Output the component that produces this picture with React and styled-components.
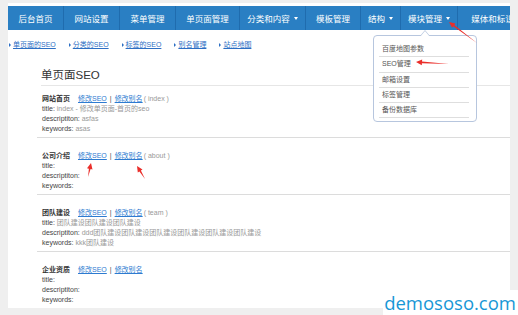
import React from "react";
import styled, { createGlobalStyle } from "styled-components";

const GlobalStyle = createGlobalStyle`
  html, body {
    margin: 0;
    padding: 0;
    background: #efefef;
    width: 518px;
    height: 315px;
    overflow: hidden;
    font-family: "Liberation Sans", "Noto Sans CJK SC", sans-serif;
  }
`;

const Panel = styled.div`
  position: relative;
  margin: 3px 8px 0 8px;
  padding-top: 3px;
  width: 502px;
  height: 302px;
  background: #fff;
  overflow: hidden;
`;

const NavBar = styled.div`
  display: flex;
  height: 24px;
  background: #2a7fc3;
  white-space: nowrap;
`;

const NavItem = styled.div`
  flex: none;
  width: ${(p) => p.w}px;
  display: flex;
  align-items: center;
  justify-content: center;
  gap: 4px;
  color: #fff;
  font-size: 8.5px;
  border-right: 1px solid #1f6cae;
  box-sizing: border-box;
`;

const Caret = styled.span`
  width: 0;
  height: 0;
  border-left: 2.5px solid transparent;
  border-right: 2.5px solid transparent;
  border-top: 3px solid #fff;
`;

const SubNav = styled.div`
  display: flex;
  gap: 13px;
  margin-top: 10px;
  padding-left: 1px;
  height: 10px;
  line-height: 10px;
  font-size: 7px;
`;

const SubLink = styled.a`
  display: flex;
  align-items: center;
  gap: 2px;
  color: #2d6fc4;
  text-decoration: underline;

  &::before {
    content: "";
    width: 0;
    height: 0;
    border-top: 2px solid transparent;
    border-bottom: 2px solid transparent;
    border-left: 2.5px solid #2d6fc4;
  }
`;

const Title = styled.div`
  margin: 18px 0 0 33px;
  padding-bottom: 3px;
  font-size: 11.5px;
  line-height: 14px;
  color: #333;
  border-bottom: 1px solid #e6e6e6;
`;

const Sections = styled.div`
  margin-left: 29px;
`;

const Section = styled.div`
  padding: 13px 0 3px 5px;
  border-bottom: 1px solid ${(p) => (p.last ? "transparent" : "#dcdcdc")};
  font-size: 7px;
  line-height: 10px;
  color: #444;

  &:first-child {
    padding-top: 8px;
  }
`;

const HeadRow = styled.div`
  display: flex;
  align-items: center;
  white-space: nowrap;
`;

const Name = styled.b`
  color: #333;
  margin-right: 8px;
`;

const Edit = styled.a`
  color: #2d7bd0;
  text-decoration: underline;
`;

const Pipe = styled.span`
  margin: 0 3px;
  color: #444;
`;

const Alias = styled.span`
  color: #999;
  margin-left: 1px;
`;

const Line = styled.div`
  white-space: nowrap;
  color: #444;
`;

const Value = styled.span`
  color: #999;
`;

const Dropdown = styled.div`
  position: absolute;
  left: 365px;
  top: 32px;
  width: 104px;
  padding: 6px 7px 3px 5px;
  box-sizing: border-box;
  background: #fff;
  border: 1px solid #b7c6de;
  border-radius: 4px;
  z-index: 5;

  &::before,
  &::after {
    content: "";
    position: absolute;
    left: 46px;
    width: 0;
    height: 0;
    border-left: 5px solid transparent;
    border-right: 5px solid transparent;
  }
  &::before {
    top: -6px;
    border-bottom: 6px solid #b7c6de;
  }
  &::after {
    top: -5px;
    border-bottom: 6px solid #fff;
  }
`;

const DropItem = styled.div`
  height: 14.3px;
  line-height: 13.3px;
  padding-left: 3px;
  font-size: 7px;
  color: #555;
  border-bottom: 1px solid #dedede;
`;

const Overlay = styled.svg`
  position: fixed;
  left: 0;
  top: 0;
  width: 518px;
  height: 315px;
  pointer-events: none;
  z-index: 20;
`;

const Watermark = styled.div`
  position: fixed;
  left: 383px;
  top: 290px;
  width: 135px;
  height: 25px;
  background: #fff;
  color: #1797d6;
  font-family: "Open Sans", sans-serif;
  font-size: 18.5px;
  line-height: 25px;
  text-align: right;
  padding-right: 2px;
  box-sizing: border-box;
  z-index: 15;
`;

const navItems = [
  { label: "后台首页", w: 56 },
  { label: "网站设置", w: 56 },
  { label: "菜单管理", w: 56 },
  { label: "单页面管理", w: 64 },
  { label: "分类和内容", w: 66, caret: true },
  { label: "模板管理", w: 55 },
  { label: "结构", w: 40, caret: true },
  { label: "模块管理", w: 57, caret: true },
  { label: "媒体和标识", w: 70 },
];

const subLinks = ["单页面的SEO", "分类的SEO", "标签的SEO", "别名管理", "站点地图"];

const pages = [
  {
    name: "网站首页",
    alias: "index",
    title: "index - 修改单页面-首页的seo",
    desc: "asfas",
    kw: "asas",
  },
  { name: "公司介绍", alias: "about", title: "", desc: "", kw: "" },
  {
    name: "团队建设",
    alias: "team",
    title: "团队建设团队建设团队建设",
    desc: "ddd团队建设团队建设团队建设团队建设团队建设团队建设",
    kw: "kkk团队建设",
  },
  { name: "企业资质", title: "", desc: "", kw: "" },
];

const dropItems = ["百度地图参数", "SEO管理", "邮箱设置", "标签管理", "备份数据库"];

// tapered arrow from tail to tip
function arrowPoints(tx, ty, hx, hy) {
  const dx = hx - tx;
  const dy = hy - ty;
  const len = Math.hypot(dx, dy);
  const ux = dx / len;
  const uy = dy / len;
  const nx = -uy;
  const ny = ux;
  const head = 6;
  const bx = hx - ux * head;
  const by = hy - uy * head;
  const pts = [
    [tx, ty],
    [bx + nx * 0.9, by + ny * 0.9],
    [bx + nx * 2.8, by + ny * 2.8],
    [hx, hy],
    [bx - nx * 2.8, by - ny * 2.8],
    [bx - nx * 0.9, by - ny * 0.9],
  ];
  return pts.map((p) => p.map((v) => v.toFixed(1)).join(",")).join(" ");
}

const arrows = [
  [477, 43, 449, 22],
  [449, 64, 416, 62],
  [88, 177, 91, 163],
  [145, 179, 137, 166],
];

export default function App() {
  return (
    <>
      <GlobalStyle />
      <Panel>
        <NavBar>
          {navItems.map((n) => (
            <NavItem key={n.label} w={n.w}>
              {n.label}
              {n.caret && <Caret />}
            </NavItem>
          ))}
        </NavBar>
        <SubNav>
          {subLinks.map((s) => (
            <SubLink key={s}>{s}</SubLink>
          ))}
        </SubNav>
        <Title>单页面SEO</Title>
        <Sections>
          {pages.map((p, i) => (
            <Section key={p.name} last={i === pages.length - 1}>
              <HeadRow>
                <Name>{p.name}</Name>
                <Edit>修改SEO</Edit>
                <Pipe>|</Pipe>
                <Edit>修改别名</Edit>
                {p.alias && <Alias>( {p.alias} )</Alias>}
              </HeadRow>
              <Line>
                title: <Value>{p.title}</Value>
              </Line>
              <Line>
                descriptiton: <Value>{p.desc}</Value>
              </Line>
              <Line>
                keywords: <Value>{p.kw}</Value>
              </Line>
            </Section>
          ))}
        </Sections>
        <Dropdown>
          {dropItems.map((d) => (
            <DropItem key={d}>{d}</DropItem>
          ))}
        </Dropdown>
      </Panel>
      <Watermark>demososo.com</Watermark>
      <Overlay viewBox="0 0 518 315">
        {arrows.map((a, i) => (
          <polygon key={i} points={arrowPoints(...a)} fill="#ea2e2a" />
        ))}
      </Overlay>
    </>
  );
}
